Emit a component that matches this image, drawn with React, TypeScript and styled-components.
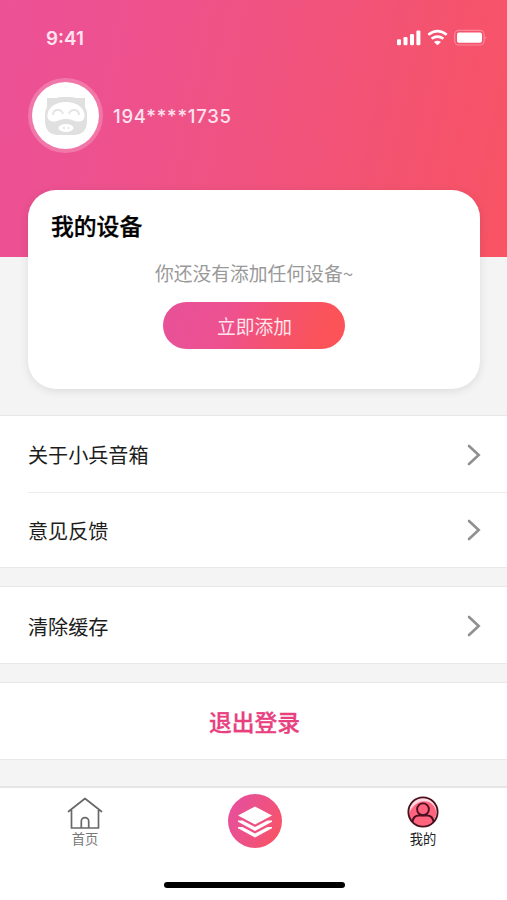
import React from 'react';
import styled, { createGlobalStyle } from 'styled-components';

const Global = createGlobalStyle`
  * { box-sizing: border-box; }
  body { margin: 0; background: #f4f4f4; font-family: Inter, "Noto Sans CJK SC", sans-serif; }
`;

const Screen = styled.div`
  width: 507px;
  height: 900px;
  display: flex;
  flex-direction: column;
  overflow: hidden;
  background: #f4f4f4;
`;

const Header = styled.header`
  height: 257px;
  flex: none;
  background: linear-gradient(102deg, #ec5196 0%, #ed5190 20%, #f05380 50%, #f4536f 78%, #f7536a 90%, #f85463 100%);
`;

const StatusBar = styled.div`
  height: 77px;
  padding: 0 20px 0 46px;
  display: flex;
  align-items: center;
  justify-content: space-between;
  color: #ffe3ef;
  font-size: 18.8px;
  font-weight: 600;
`;

const StatusIcons = styled.svg`
  display: block;
  width: 92px;
  height: 20px;
  margin-bottom: 1px;
`;

const Profile = styled.div`
  display: flex;
  align-items: center;
  gap: 10px;
  height: 77px;
  margin-left: 28px;
`;

const Avatar = styled.div`
  width: 75px;
  height: 75px;
  border-radius: 50%;
  background: #fff;
  background-clip: padding-box;
  border: 4px solid rgba(255, 255, 255, 0.22);
  display: flex;
  align-items: center;
  justify-content: center;
`;

const Phone = styled.span`
  color: #ffe3ef;
  font-size: 18.5px;
  font-weight: 500;
  letter-spacing: 0.75px;
`;

const DeviceCard = styled.section`
  position: relative;
  flex: none;
  height: 199.5px;
  margin: -67.5px 27px 0 28px;
  padding: 20.5px 23px 0;
  border-radius: 28px;
  background: #fff;
  box-shadow: 0 2px 10px rgba(0, 0, 0, 0.1);
  display: flex;
  flex-direction: column;
`;

const CardTitle = styled.h1`
  margin: 0;
  font-size: 22.8px;
  line-height: 34px;
  font-weight: 500;
  color: #000;
  -webkit-text-stroke: 0.3px #000;
`;

const EmptyText = styled.p`
  margin: 15px 0 0;
  align-self: center;
  font-family: "Noto Sans CJK SC", sans-serif;
  font-size: 18.8px;
  line-height: 28px;
  color: #999;
`;

const AddButton = styled.button`
  align-self: center;
  margin-top: 14.5px;
  width: 182px;
  height: 47px;
  border: 0;
  padding: 0 0 0 1px;
  border-radius: 24px;
  background: linear-gradient(110deg, #e95197 10%, #ed5190 35%, #f45270 60%, #fb5358 88%);
  color: #ffe6ec;
  font: 400 18.8px "Noto Sans CJK SC", sans-serif;
`;

const Group = styled.section<{ $gap: number; $height: number }>`
  flex: none;
  height: ${(p) => p.$height}px;
  margin-top: ${(p) => p.$gap}px;
  background: #fff;
  border-top: 1px solid #e7e7e7;
  border-bottom: 1px solid #e9e9e9;
  display: flex;
  flex-direction: column;
`;

const Row = styled.div`
  flex: 1;
  margin-left: 28px;
  padding: 2px 26px 0 0;
  display: flex;
  align-items: center;
  justify-content: space-between;
  font-size: 20.1px;
  color: #1d1d1d;
  & + & {
    border-top: 1px solid #ececec;
    padding-top: 1px;
  }
`;

const Logout = styled.button`
  flex: 1;
  border: 0;
  padding: 1px 0 0 2px;
  background: none;
  color: #e8407f;
  font: 500 22.8px "Noto Sans CJK SC", sans-serif;
  -webkit-text-stroke: 0.3px #e8407f;
`;

const TabBar = styled.nav`
  flex: 1;
  margin-top: 26px;
  border-top: 2px solid #e5e5e5;
  background: #fff;
  display: flex;
  flex-direction: column;
  align-items: center;
`;

const Tabs = styled.div`
  width: 100%;
  height: 94px;
  display: grid;
  grid-template-columns: 170px 169px 168px;
`;

const Tab = styled.div<{ $active?: boolean }>`
  display: flex;
  flex-direction: column;
  align-items: center;
  padding-top: 6px;
  font-size: 13.3px;
  line-height: 21px;
  color: ${(p) => (p.$active ? '#222' : '#777')};
  svg { display: block; }
`;

const HomeIndicator = styled.div`
  width: 181px;
  height: 6px;
  margin-left: 2px;
  border-radius: 3px;
  background: #000;
`;

const Chevron = () => (
  <svg width="14" height="22" viewBox="0 0 14 22" fill="none">
    <path d="M2 2 11.700 11 2 20" stroke="#909090" strokeWidth="2.6" strokeLinecap="round" strokeLinejoin="miter" />
  </svg>
);

const Signals = () => (
  <StatusIcons viewBox="395 28 92 20" fill="none">
    <g fill="#fff">
      <rect x="397" y="39.2" width="4" height="6" rx="1.2" />
      <rect x="403.5" y="37" width="4" height="8.2" rx="1.2" />
      <rect x="410" y="34" width="4" height="11.2" rx="1.2" />
      <rect x="416.4" y="30.5" width="4" height="14.7" rx="1.2" />
      <rect x="457" y="32.6" width="25" height="10.2" rx="2" />
      <path d="M437.5 45.3 434 42q3.5-2.7 7 0Z" />
    </g>
    <path d="M428.3 34.8q9.2-7.2 18.4 0M431.6 38.8q5.9-4.4 11.8 0" stroke="#fff" strokeWidth="2.6" />
    <rect x="454.7" y="30.4" width="29.4" height="14.6" rx="4" stroke="#ffc0cd" strokeOpacity=".5" strokeWidth="1.1" />
    <path d="M485.6 36q1.3 1.8 0 3.6Z" fill="#ffc0cd" />
  </StatusIcons>
);

const Bear = () => (
  <svg width="44" height="38" viewBox="0 0 44 38" fill="none">
    <path d="M3 1h9q10-3 20 0h9v9q2 3 2 8v8q-1 11-12 12H13Q2 37 1 26v-8q0-5 2-8Z" fill="#e0e0e0" />
    <path d="M3.500 17C5 9 13 5 22 5s17 4 18.500 12c.8 5-2 7.500-6 7.500-5 0-6-2.500-12.500-2.500S14.500 24.500 9.500 24.500c-4 0-6.800-2.500-6-7.500Z" fill="#fff" />
    <path d="M9 18q0-5 5-5 4 0 5 4M25 17q1-4 5-4 5 0 5 5" stroke="#e4e4e4" strokeWidth="1.800" />
    <ellipse cx="22" cy="31" rx="7.500" ry="4" fill="#fff" />
    <circle cx="20" cy="31" r="1" fill="#ddd" />
    <circle cx="24.500" cy="31" r="1" fill="#ddd" />
  </svg>
);

const Home = () => (
  <svg width="36" height="35" viewBox="0 0 36 35" fill="none" stroke="#686868" strokeWidth="1.700" strokeLinejoin="round" strokeLinecap="round">
    <path d="M1.500 17.500 18 4.500 34.500 17.500M4.500 16v18h27V16M14.300 33.500v-6.200a3.700 3.700 0 0 1 7.400 0v6.200" />
  </svg>
);

const Stack = () => (
  <svg width="54" height="54" viewBox="0 0 54 54">
    <defs>
      <linearGradient id="disc" x1="0" y1=".3" x2="1" y2=".8">
        <stop offset=".1" stopColor="#e85097" />
        <stop offset=".6" stopColor="#ef527f" />
        <stop offset="1" stopColor="#fa5360" />
      </linearGradient>
    </defs>
    <circle cx="27" cy="27" r="27" fill="url(#disc)" />
    <g fill="#fff">
      <path d="M27 12.500 44 21.500 27 30.500 10 21.500Z" />
      <path d="M10 26.500h4.500L27 33 39.500 26.500H44v1.300L27 37 10 27.800Z" />
      <path d="M10 33h4.500L27 39.500 39.500 33H44v1.300L27 43.500 10 34.300Z" />
    </g>
  </svg>
);

const User = () => (
  <svg width="32" height="35" viewBox="0 0 32 35" fill="none">
    <circle cx="16" cy="18" r="14.500" fill="#ffd8df" />
    <path d="M5 14Q12 5 22 8q8 4 7 13-3 11-13 11.500Q6 32 3 24Q1 19 5 14Z" fill="#ff637e" />
    <g stroke="#4a1020" strokeWidth="1.900">
      <circle cx="16" cy="18" r="14.600" />
      <circle cx="16" cy="15.300" r="5.900" />
      <path d="M5.500 28c.5-4.500 3-6.500 6.500-6.500h8c3.500 0 6 2 6.500 6.500" />
    </g>
  </svg>
);

export default function App() {
  return (
    <Screen>
      <Global />
      <Header>
        <StatusBar>
          <span>9:41</span>
          <Signals />
        </StatusBar>
        <Profile>
          <Avatar><Bear /></Avatar>
          <Phone>194****1735</Phone>
        </Profile>
      </Header>
      <DeviceCard>
        <CardTitle>我的设备</CardTitle>
        <EmptyText>你还没有添加任何设备~</EmptyText>
        <AddButton>立即添加</AddButton>
      </DeviceCard>
      <Group $gap={26} $height={153}>
        <Row>关于小兵音箱<Chevron /></Row>
        <Row>意见反馈<Chevron /></Row>
      </Group>
      <Group $gap={18} $height={78}>
        <Row>清除缓存<Chevron /></Row>
      </Group>
      <Group $gap={18} $height={78}>
        <Logout>退出登录</Logout>
      </Group>
      <TabBar>
        <Tabs>
          <Tab><Home />首页</Tab>
          <Tab><Stack /></Tab>
          <Tab $active><User />我的</Tab>
        </Tabs>
        <HomeIndicator />
      </TabBar>
    </Screen>
  );
}
